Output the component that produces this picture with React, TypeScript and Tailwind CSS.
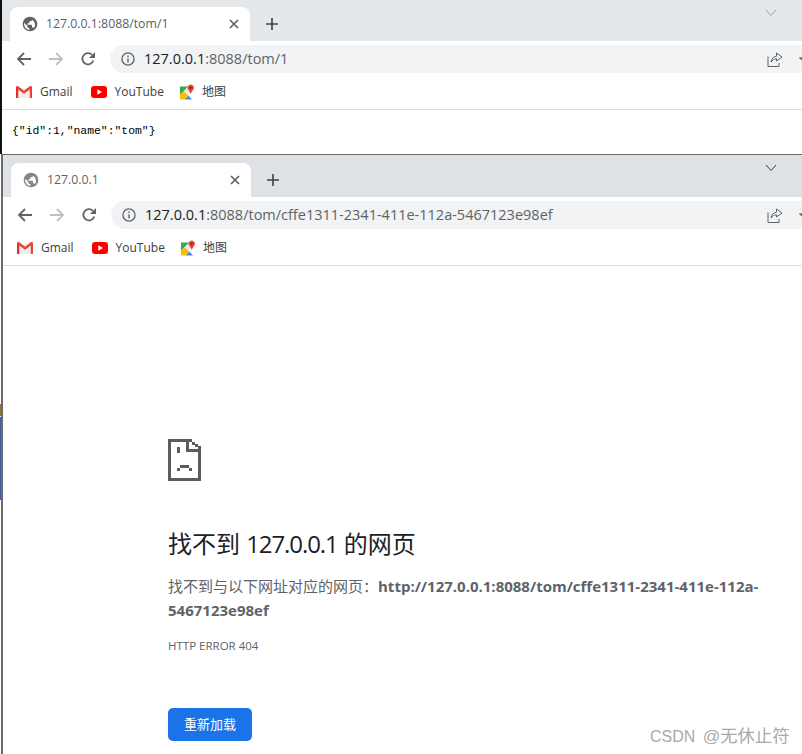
const Sans = "font-['Open_Sans','Noto_Sans_CJK_SC',sans-serif]";

function Globe({ color }: { color: string }) {
  return (
    <svg width="16" height="16" viewBox="0 0 24 24">
      <path fill={color} d="M12 1a11 11 0 1 0 0 22 11 11 0 0 0 0-22Zm-1 19.9A9 9 0 0 1 3.2 10.2L8 15v1c0 1.1.9 2 2 2h1v2.9Zm6.9-2.5A2 2 0 0 0 16 17h-1v-3a1 1 0 0 0-1-1H8v-2h2a1 1 0 0 0 1-1V8h2a2 2 0 0 0 2-2v-.4a9 9 0 0 1 2.9 12.8Z" />
    </svg>
  );
}

function Close() {
  return (
    <svg width="10" height="10" viewBox="0 0 10 10" stroke="#5f6368" strokeWidth="1.7" fill="none">
      <path d="M1 1l8 8M9 1l-8 8" />
    </svg>
  );
}

function Plus() {
  return (
    <svg width="12" height="12" viewBox="0 0 12 12" stroke="#3c4043" strokeWidth="1.6" fill="none">
      <path d="M6 0v12M0 6h12" />
    </svg>
  );
}

function Chevron({ color }: { color: string }) {
  return (
    <svg width="12" height="8" viewBox="0 0 12 8" stroke={color} strokeWidth="1" fill="none">
      <path d="M1 1l5 5.500 5-5.500" />
    </svg>
  );
}

function Arrow({ color, flip }: { color: string; flip?: boolean }) {
  return (
    <svg width="16" height="14" viewBox="0 0 16 14" stroke={color} strokeWidth="1.8" fill="none" className={flip ? "rotate-180" : ""}>
      <path d="M15 7H2M8 1L2 7l6 6" />
    </svg>
  );
}

function Reload() {
  return (
    <svg width="16" height="16" viewBox="0 0 16 16" fill="none">
      <path d="M13.300 9.500A5.600 5.600 0 1 1 12 3.900" stroke="#5f6368" strokeWidth="1.800" />
      <path d="M15 1v6H9z" fill="#5f6368" />
    </svg>
  );
}

function Info() {
  return (
    <svg width="14" height="14" viewBox="0 0 14 14" fill="none">
      <circle cx="7" cy="7" r="6.100" stroke="#5f6368" strokeWidth="1.300" />
      <path d="M7 6.200v4.200M7 3.500v1.400" stroke="#5f6368" strokeWidth="1.400" />
    </svg>
  );
}

function Share() {
  return (
    <svg width="16" height="15" viewBox="0 0 16 15" fill="none" stroke="#5f6368" strokeWidth="1">
      <path d="M1 4.500v10h11V11" />
      <path d="M9.500 1l5.500 4-5.500 4V6.800C7 6.800 5.500 8 4 10c.5-3 2.300-5.500 5.500-5.800z" strokeLinejoin="round" />
    </svg>
  );
}

function Star() {
  return (
    <svg width="16" height="15" viewBox="0 0 16 15" fill="none" stroke="#5f6368" strokeWidth="1.200">
      <path d="M8 1l2 4.500 5 .5-3.700 3.300 1 4.700L8 11.500 3.700 14l1-4.700L1 6l5-.5z" />
    </svg>
  );
}

function GmailIcon() {
  return (
    <svg width="16" height="12" viewBox="0 0 16 12">
      <path fill="#eeeeee" d="M1 2h14v10H1z" />
      <path fill="#ea4335" d="M0 1.300C0 .2 1.300-.4 2.200.3L8 4.800 13.800.3C14.700-.4 16 .2 16 1.300V12h-2.200V3.600L8 7.800 2.200 3.600V12H0z" />
      <path fill="#c5221f" d="M0 1.500L2.200 3.600V12H1a1 1 0 0 1-1-1z" opacity=".5" />
    </svg>
  );
}

function YouTubeIcon() {
  return (
    <svg width="16" height="12" viewBox="0 0 16 12">
      <rect width="16" height="12" rx="3" fill="#ff0000" />
      <path d="M6.300 3.300v5.400L11 6z" fill="#fff" />
    </svg>
  );
}

function MapsIcon() {
  return (
    <svg width="15" height="16" viewBox="0 0 16 16">
      <path fill="#34a853" d="M1 2h9L1 11z" />
      <path fill="#fbbc04" d="M1 11l4-4 5 5-4 4H2a1 1 0 0 1-1-1z" />
      <path fill="#4285f4" d="M6 16l4-4 4 4z" />
      <path fill="#e8eaed" d="M5 7l5-5h1v6l-1 4z" />
      <path fill="#ea4335" d="M12.500 0a3.500 3.500 0 0 1 3 5c-.7 1.500-2.200 2.700-3 5-.8-2.300-2.300-3.500-3-5a3.500 3.500 0 0 1 3-5z" />
      <circle cx="12.500" cy="3.500" r="1.200" fill="#8c1c13" />
    </svg>
  );
}

function SadPage() {
  const r: [number, number, number, number][] = [
    [0, 0, 3, 42],
    [0, 0, 24, 3],
    [0, 39, 33, 3],
    [30, 7, 3, 35],
    [18, 0, 3, 13],
    [18, 10, 15, 3],
    [24, 3, 3, 3],
    [27, 5, 3, 3],
    [9, 8, 3, 6],
    [12, 26, 9, 3],
    [9, 29, 3, 3],
    [21, 29, 3, 3],
  ];
  return (
    <svg width="33" height="42" viewBox="0 0 33 42" shapeRendering="crispEdges">
      {r.map(([x, y, w, h], i) => (
        <rect key={i} x={x} y={y} width={w} height={h} fill="#5a5c5f" />
      ))}
    </svg>
  );
}

function Mark({ icon, label, className }: { icon: React.ReactNode; label: string; className?: string }) {
  return (
    <div className={`flex items-center ${className ?? ""}`}>
      <span className="flex justify-center">{icon}</span>
      <span className={`ml-2 text-[12px] text-[#3c4043] ${Sans}`}>{label}</span>
    </div>
  );
}

function Chrome({
  title,
  host,
  path,
  tabBg,
  chevron,
  globe,
  barH,
}: {
  title: string;
  host: string;
  path: string;
  tabBg: string;
  chevron: string;
  globe: string;
  barH: string;
}) {
  return (
    <div>
      <div className={`flex items-end pl-2 ${barH} ${tabBg}`}>
        <div className="flex h-[34px] w-[240px] items-center rounded-t-[8px] bg-white pl-[12px] pr-[11px]">
          <Globe color={globe} />
          <span className={`ml-2 flex-1 text-[12.3px] text-[#5a6168] ${Sans}`}>{title}</span>
          <Close />
        </div>
        <div className="ml-4 flex h-[34px] items-center">
          <Plus />
        </div>
        <div className="ml-auto mr-[25px] self-start pt-[9px]">
          <Chevron color={chevron} />
        </div>
      </div>
      <div className="flex h-[32px] items-end bg-white">
        <div className="flex h-[28px] w-[108px] items-center gap-[16px] pl-[14px]">
          <Arrow color="#5f6368" />
          <Arrow color="#bdc1c6" flip />
          <Reload />
        </div>
        <div className="flex h-[28px] flex-1 items-center rounded-l-[14px] bg-[#f1f3f4] pl-[11px]">
          <Info />
          <span className={`ml-[9px] flex-1 text-[14.5px] ${Sans}`}>
            <span className="text-[#202124]">{host}</span>
            <span className="text-[#5f6368]">{path}</span>
          </span>
          <Share />
          <span className="ml-4 -mr-[13px]">
            <Star />
          </span>
        </div>
      </div>
      <div className="box-content flex h-[34px] items-center border-b border-[#dadce0] bg-white pl-[14px] pt-[2px]">
        <Mark icon={<GmailIcon />} label="Gmail" />
        <Mark icon={<YouTubeIcon />} label="YouTube" className="ml-[18px]" />
        <Mark icon={<MapsIcon />} label="地图" className="ml-[15px]" />
      </div>
    </div>
  );
}

export default function App() {
  return (
    <div className="relative h-[754px] w-[802px] overflow-hidden bg-white">
      <div className="h-[154px] border-l-2 border-[#111111]">
        <Chrome
          title="127.0.0.1:8088/tom/1"
          host="127.0.0.1"
          path=":8088/tom/1"
          tabBg="bg-[#e5e8eb]"
          barH="h-[41px]"
          chevron="#9aa0a6"
          globe="#5f6368"
        />
        <p className="pl-[10px] pt-[14px] font-['Liberation_Mono',monospace] text-[11.4px] font-normal leading-[14px] text-black">
          {'{"id":1,"name":"tom"}'}
        </p>
      </div>
      <div className="ml-px h-[600px] border-l-2 border-t-[1px] border-[#6b6b6b]">
        <Chrome
          title="127.0.0.1"
          host="127.0.0.1"
          path=":8088/tom/cffe1311-2341-411e-112a-5467123e98ef"
          tabBg="bg-[#dee1e6]"
          barH="h-[42px]"
          chevron="#3c4043"
          globe="#80868b"
        />
        <main className={`pl-[165px] pr-[30px] pt-[173px] ${Sans}`}>
          <SadPage />
          <h1 className="mt-[45px] text-[24px] leading-[36px] font-normal text-[#202124]">
            找不到 <span className="tracking-[-1.1px]">127.0.0.1</span> 的网页
          </h1>
          <p className="mt-[12px] text-[15px] leading-[24px] text-[#5f6368]">
            找不到与以下网址对应的网页：<b className="font-bold">http://127.0.0.1:8088/tom/cffe1311-2341-411e-112a-5467123e98ef</b>
          </p>
          <p className="mt-[15px] text-[11.5px] leading-[18px] text-[#5f6368]">HTTP ERROR 404</p>
          <button className="mt-[53px] flex h-[33px] w-[84px] items-center justify-center rounded-[5px] bg-[#1a73e8] text-[13px] text-white">
            重新加载
          </button>
        </main>
      </div>
      <div className="absolute left-0 top-[417px] h-[83px] w-px bg-[#3f5f9f]" />
      <div className="absolute left-0 top-[404px] h-[12px] w-px bg-[#8a7a3a]" />
      <div className="absolute left-[650px] top-[724px] font-['Liberation_Sans','Noto_Sans_CJK_SC',sans-serif] text-[16px] leading-[24px] text-[#a9a9a9]">
        CSDN <span className="ml-[3px] text-[17.3px]">@无休止符</span>
      </div>
    </div>
  );
}
